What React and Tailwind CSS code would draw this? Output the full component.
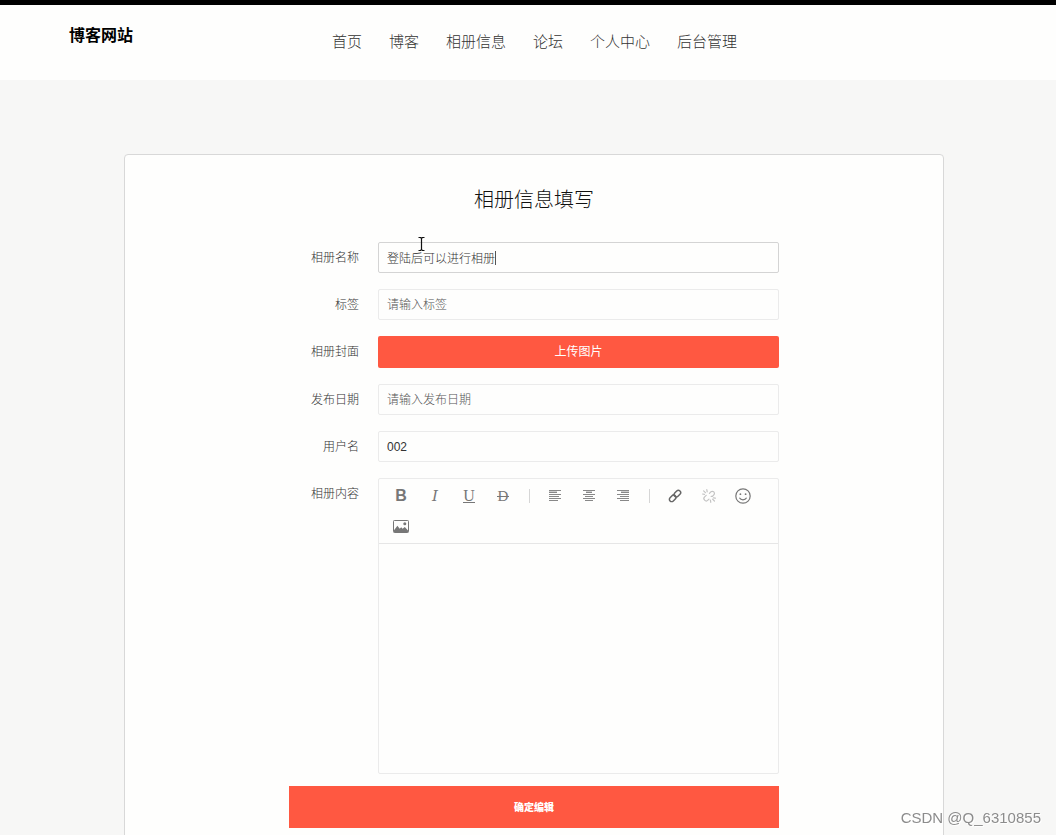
import { useEffect, useRef, useState } from 'react'

const navItems = ['首页', '博客', '相册信息', '论坛', '个人中心', '后台管理']

const inputClass =
  'h-[31px] w-full rounded-xs border border-[#ebebeb] bg-transparent px-2 text-xs text-[#333] outline-none placeholder:text-[#555] hover:border-[#d4d4d4] focus:border-[#d4d4d4]'

function Field({ id, label, children }) {
  return (
    <div className="flex gap-[19px]">
      <label className="w-[70px] shrink-0 pt-2 text-right text-xs leading-4 text-[#333]" htmlFor={id}>
        {label}
      </label>
      <div className="min-w-0 flex-1">{children}</div>
    </div>
  )
}

function ToolButton({ title, children, disabled }) {
  return (
    <button
      aria-label={title}
      className="flex h-[30px] w-[34px] items-center justify-center text-[#777] disabled:text-[#c4c4c4]"
      disabled={disabled}
      title={title}
      type="button"
    >
      {children}
    </button>
  )
}

function Separator() {
  return (
    <span className="flex h-[30px] w-[18px] items-center justify-center">
      <span className="h-[14px] w-px bg-[#d6d6d6]" />
    </span>
  )
}

function AlignIcon({ lines }) {
  return (
    <svg className="h-3 w-3" fill="none" stroke="#888" viewBox="0 0 12 12">
      {lines.map(([from, to], i) => (
        <path d={`M${from} ${i * 2 + 0.5}H${to}`} key={i} />
      ))}
      <path d={`M${lines[1][0]} 1.5H${lines[1][1]}`} stroke="#ccc" />
    </svg>
  )
}

function LinkIcon() {
  return (
    <svg className="h-[14px] w-[14px]" fill="none" stroke="#666" strokeWidth="1.5" viewBox="0 0 14 14">
      <g transform="rotate(-45 7 7)">
        <rect height="4.6" rx="2.3" width="7.4" x="0" y="4.7" />
        <rect height="4.6" rx="2.3" width="7.4" x="6.6" y="4.7" />
      </g>
    </svg>
  )
}

function UnlinkIcon() {
  return (
    <svg className="h-[14px] w-[14px]" fill="none" stroke="currentColor" strokeLinecap="round" strokeWidth="1.2" viewBox="0 0 14 14">
      <path d="M7.4 4.4 8.8 2.9a2.1 2.1 0 0 1 3 3L10.4 7.4H9.2" />
      <path d="M4.2 6.4 2.6 7.9a2.3 2.3 0 0 0 3.3 3.3L7 10.1" />
      <path d="M4.8.7 5.2 2.8M1.6 1.8l1.8 1.8M.6 5l1.8.3M8.4 11.2l.4 2.1M10.6 10.2l1.8 1.8M11.4 8.8l2 .3" />
    </svg>
  )
}

function FaceIcon() {
  return (
    <svg className="h-4 w-4" fill="none" stroke="currentColor" strokeWidth="1.2" viewBox="0 0 16 16">
      <circle cx="8" cy="8" r="7.2" />
      <path d="M4.4 9.8c.8 1.4 2.1 2.1 3.6 2.1s2.8-.7 3.6-2.1" />
      <circle cx="5.4" cy="6.2" fill="currentColor" r=".9" stroke="none" />
      <circle cx="10.6" cy="6.2" fill="currentColor" r=".9" stroke="none" />
    </svg>
  )
}

function ImageIcon() {
  return (
    <svg className="h-[13px] w-4" fill="none" viewBox="0 0 16 13">
      <rect height="12" rx=".8" stroke="currentColor" width="15" x=".5" y=".5" />
      <path d="M1 12.2v-2l3.4-4.4 2.3 3 1.5-1.6 1.4 1.5L11.8 7 15 10.6v1.6z" fill="currentColor" />
      <circle cx="11.8" cy="3.8" fill="currentColor" r="1.5" />
    </svg>
  )
}

function Editor() {
  return (
    <div className="rounded-xs border border-[#ebebeb]">
      <div className="flex flex-wrap border-b border-[#e6e6e6] px-[5px] py-[2px]">
        <ToolButton title="加粗">
          <span className="font-['Liberation_Sans',sans-serif] text-base font-bold">B</span>
        </ToolButton>
        <ToolButton title="斜体">
          <span className="font-['DejaVu_Serif',serif] text-[15px] font-normal italic">I</span>
        </ToolButton>
        <ToolButton title="下划线">
          <span className="border-b border-current font-['Liberation_Serif',serif] text-base leading-3 font-normal">
            U
          </span>
        </ToolButton>
        <ToolButton title="删除线">
          <span className="relative px-px font-['Liberation_Serif',serif] text-[15px] leading-4 font-normal">
            D
            <span className="absolute inset-x-0 top-1/2 h-px bg-current" />
          </span>
        </ToolButton>
        <Separator />
        <ToolButton title="左对齐">
          <AlignIcon lines={[[0, 12], [0, 8], [0, 12], [0, 10], [0, 12], [0, 9]]} />
        </ToolButton>
        <ToolButton title="居中对齐">
          <AlignIcon lines={[[0, 12], [3, 9], [0, 12], [2, 10], [0, 12], [2, 10]]} />
        </ToolButton>
        <ToolButton title="右对齐">
          <AlignIcon lines={[[0, 12], [4, 12], [0, 12], [3, 12], [0, 12], [3, 12]]} />
        </ToolButton>
        <Separator />
        <ToolButton title="插入链接">
          <LinkIcon />
        </ToolButton>
        <ToolButton disabled title="清除链接">
          <UnlinkIcon />
        </ToolButton>
        <ToolButton title="表情">
          <FaceIcon />
        </ToolButton>
        <ToolButton title="图片">
          <ImageIcon />
        </ToolButton>
      </div>
      <textarea
        aria-label="相册内容"
        className="block h-[229px] w-full resize-none p-2 text-xs text-[#333] outline-none"
        id="content"
      />
    </div>
  )
}

export default function App() {
  const [name, setName] = useState('登陆后可以进行相册')
  const nameRef = useRef(null)

  useEffect(() => {
    const el = nameRef.current
    el.focus()
    el.setSelectionRange(el.value.length, el.value.length)
  }, [])

  return (
    <div className="min-h-screen bg-[#f7f7f6] font-['Liberation_Sans','Noto_Sans_CJK_SC',sans-serif] font-light">
      <header className="flex h-20 items-start border-t-[5px] border-black bg-[#fefefd] pl-[69px]">
        <a className="w-[263px] shrink-0 pt-[19px] text-base font-bold text-black" href="#home">
          博客网站
        </a>
        <nav className="flex gap-[27px] pt-[25px] text-[15px] leading-6 text-[#333]">
          {navItems.map((item) => (
            <a className="whitespace-nowrap" href="#nav" key={item}>
              {item}
            </a>
          ))}
        </nav>
      </header>

      <main className="pt-[74px] pl-3">
        <section className="mx-auto max-w-[820px] rounded-sm border border-[#d8d8d8] bg-[#fefefd] pt-[29px] pb-12">
          <h1 className="text-center text-xl leading-8 text-[#111]">相册信息填写</h1>

          <form className="mx-auto mt-[26px] max-w-[490px]" onSubmit={(e) => e.preventDefault()}>
            <div className="flex flex-col gap-4">
              <Field id="name" label="相册名称">
                <div className="relative">
                  <input
                    className={`${inputClass} caret-transparent`}
                    id="name"
                    onChange={(e) => setName(e.target.value)}
                    ref={nameRef}
                    value={name}
                  />
                  <div aria-hidden="true" className="pointer-events-none absolute inset-y-0 left-[9px] flex items-center">
                    <span className="invisible text-xs">{name}</span>
                    <span className="h-[14px] w-px bg-[#555]" />
                  </div>
                  <svg className="pointer-events-none absolute -top-[5px] left-10 h-[14px] w-[7px]" fill="none" stroke="#111" viewBox="0 0 7 14">
                    <path d="M.5.5h2l1 1 1-1h2M3.5 1v12M.5 13.5h2l1-1 1 1h2" strokeWidth="1.2" />
                  </svg>
                </div>
              </Field>
              <Field id="tag" label="标签">
                <input className={inputClass} id="tag" placeholder="请输入标签" />
              </Field>
              <Field id="cover" label="相册封面">
                <button className="h-8 w-full rounded-xs bg-[#ff5841] text-xs font-normal text-white" id="cover" type="button">
                  上传图片
                </button>
              </Field>
              <Field id="date" label="发布日期">
                <input className={inputClass} id="date" placeholder="请输入发布日期" />
              </Field>
              <Field id="user" label="用户名">
                <input className={inputClass} defaultValue="002" id="user" />
              </Field>
              <Field id="content" label="相册内容">
                <Editor />
              </Field>
            </div>
            <button className="mt-3 h-[42px] w-full bg-[#ff5841] text-[10px] font-black text-white" type="submit">
              确定编辑
            </button>
          </form>
        </section>
      </main>

      <div className="fixed right-[15px] bottom-[5px] text-[15px] leading-6 font-normal text-[#8c8c8c] [text-shadow:1px_1px_0_#fff]">
        CSDN @Q_6310855
      </div>
    </div>
  )
}
